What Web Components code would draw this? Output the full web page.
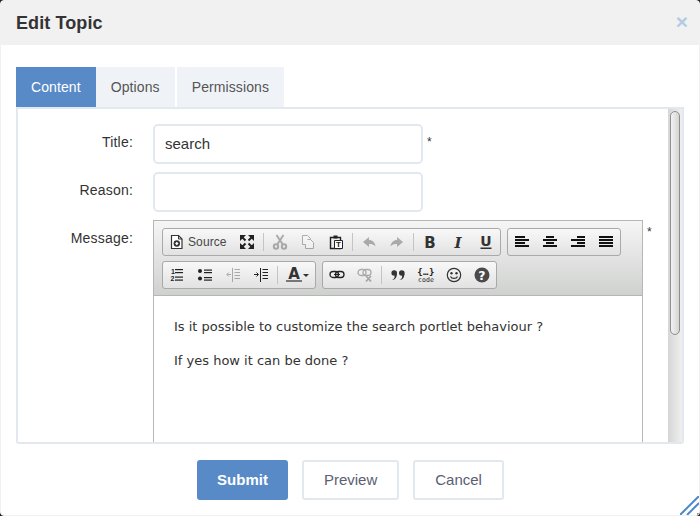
<!DOCTYPE html>
<html>
<head>
<meta charset="utf-8">
<title>Edit Topic</title>
<style>
    html, body { margin: 0; padding: 0; background: #222; }
    body { width: 700px; height: 516px; overflow: hidden; font-family: 'Liberation Sans', Arial, sans-serif; }
</style>
</head>
<body>
<topic-dialog>
    <span slot="title">Edit Topic</span>
    <tab-bar>
        <tab-item active>Content</tab-item>
        <tab-item>Options</tab-item>
        <tab-item>Permissions</tab-item>
    </tab-bar>
    <scroll-panel>
        <form-row label="Title:" required style="--star-top: 11px"><text-field>search</text-field></form-row>
        <form-row label="Reason:"><text-field></text-field></form-row>
        <form-row label="Message:" required style="--star-top: 5px">
            <rich-editor>
                <tool-group slot="toolbar">
                    <tool-btn icon="source" label="Source"></tool-btn>
                    <tool-btn icon="maximize"></tool-btn>
                    <tool-sep></tool-sep>
                    <tool-btn icon="cut" disabled></tool-btn>
                    <tool-btn icon="copy" disabled></tool-btn>
                    <tool-btn icon="paste"></tool-btn>
                    <tool-sep></tool-sep>
                    <tool-btn icon="undo" disabled></tool-btn>
                    <tool-btn icon="redo" disabled></tool-btn>
                    <tool-sep></tool-sep>
                    <tool-btn icon="bold"></tool-btn>
                    <tool-btn icon="italic"></tool-btn>
                    <tool-btn icon="underline"></tool-btn>
                </tool-group>
                <tool-group slot="toolbar">
                    <tool-btn icon="alignleft"></tool-btn>
                    <tool-btn icon="aligncenter"></tool-btn>
                    <tool-btn icon="alignright"></tool-btn>
                    <tool-btn icon="justify"></tool-btn>
                </tool-group>
                <tool-group slot="toolbar">
                    <tool-btn icon="numlist"></tool-btn>
                    <tool-btn icon="bulletlist"></tool-btn>
                    <tool-btn icon="outdent" disabled></tool-btn>
                    <tool-btn icon="indent"></tool-btn>
                    <tool-sep></tool-sep>
                    <tool-btn icon="textcolor" arrow></tool-btn>
                </tool-group>
                <tool-group slot="toolbar">
                    <tool-btn icon="link"></tool-btn>
                    <tool-btn icon="unlink" disabled></tool-btn>
                    <tool-sep></tool-sep>
                    <tool-btn icon="quote"></tool-btn>
                    <tool-btn icon="code"></tool-btn>
                    <tool-btn icon="smiley"></tool-btn>
                    <tool-btn icon="help"></tool-btn>
                </tool-group>
                <p>Is it possible to customize the search portlet behaviour ?</p>
                <p>If yes how it can be done ?</p>
            </rich-editor>
        </form-row>
    </scroll-panel>
    <dlg-button slot="footer" primary>Submit</dlg-button>
    <dlg-button slot="footer">Preview</dlg-button>
    <dlg-button slot="footer">Cancel</dlg-button>
</topic-dialog>

<script>
function bars(rows) {
    return rows.map((r, i) => `<rect x="${r[0]}" y="${2 + i * 3}" width="${r[1]}" height="2" fill="#111"/>`).join('');
}

// the list lines shared by outdent and indent, the arrow is what differs
function indentIcon(arrow) {
    return `<g fill="#222"><rect x="7" y="1" width="1" height="14"/><rect x="9.500" y="2" width="5.500" height="1"/><rect x="9.500" y="5" width="5.500" height="1"/><rect x="9.500" y="8" width="5.500" height="1"/><rect x="9.500" y="11" width="5.500" height="1"/></g><path d="${arrow}" fill="none" stroke="#222"/>`;
}

const ICONS = {
    source: `<path d="M2.500 1.500h7l3.500 3.500v9.500h-10.500z" fill="#fff" stroke="#333" stroke-width="1.200"/><path d="M9.500 1.500v3.500h3.500" fill="none" stroke="#333"/><circle cx="7.800" cy="9.500" r="3.200" fill="#333"/><path d="M7.800 7.800l1.700 1.700-1.700 1.700-1.700-1.700z" fill="#fff"/>`,
    maximize: `<g fill="#222"><path d="M1 1h6L1 7z"/><path d="M15 1H9l6 6z"/><path d="M1 15H7L1 9z"/><path d="M15 15H9l6-6z"/></g><path d="M3 3l3.500 3.500M13 3L9.500 6.500M3 13l3.500-3.500M13 13L9.500 9.500" stroke="#222" stroke-width="2"/>`,
    cut: `<g fill="none" stroke="#222" stroke-width="2"><circle cx="4" cy="12.500" r="2.200"/><circle cx="12" cy="12.500" r="2.200"/><path d="M5 10.800L11.500 1M11 10.800L4.500 1"/></g>`,
    copy: `<g fill="#fff" stroke="#222"><path d="M2.500 1.500h5l3 3v6h-8z"/><path d="M7.500 5.500h3l3 3v6h-8v-4"/></g>`,
    paste: `<path d="M2.500 3.500h10v11h-10z" fill="none" stroke="#222" stroke-width="1.400"/><path d="M5.500 1.500h4v3h-4z" fill="#222"/><path d="M6.500 6.500h8v8h-8z" fill="#fff" stroke="#222"/><text x="10.500" y="13.200" font-size="8" font-weight="bold" text-anchor="middle" fill="#222" font-family="Liberation Sans">T</text>`,
    undo: `<path d="M8 3L2 8l6 5v-3c3 0 5 .6 6.500 2.500C14 8.500 11.500 6 8 6z" fill="#222"/>`,
    redo: `<path d="M8 3l6 5-6 5v-3c-3 0-5 .6-6.500 2.500C2 8.500 4.500 6 8 6z" fill="#222"/>`,
    bold: `<text x="8" y="13.500" font-size="15" font-weight="bold" text-anchor="middle" fill="#333" font-family="DejaVu Sans">B</text>`,
    italic: `<text x="8" y="13.500" font-size="15" font-weight="bold" font-style="italic" text-anchor="middle" fill="#333" font-family="DejaVu Serif">I</text>`,
    underline: `<text x="8" y="12" font-size="14" font-weight="bold" text-anchor="middle" fill="#333" font-family="DejaVu Sans">U</text><rect x="2.500" y="13.500" width="11" height="1.500" fill="#333"/>`,
    alignleft: bars([[1, 10], [1, 14], [1, 10], [1, 14]]),
    aligncenter: bars([[4, 8], [1, 14], [4, 8], [1, 14]]),
    alignright: bars([[7, 8], [1, 14], [7, 8], [1, 14]]),
    justify: bars([[1, 14], [1, 14], [1, 14], [1, 14]]),
    numlist: `<g font-size="7" font-weight="bold" fill="#222" font-family="Liberation Sans"><text x="2" y="7">1</text><text x="1.500" y="14">2</text></g><g fill="#222"><rect x="6" y="2" width="8" height="1.200"/><rect x="6" y="5" width="8" height="1.200"/><rect x="6" y="9.500" width="8" height="1.200"/><rect x="6" y="12.500" width="8" height="1.200"/></g>`,
    bulletlist: `<g fill="#222"><circle cx="3" cy="4" r="2"/><circle cx="3" cy="11.500" r="2"/><rect x="7" y="2.500" width="8" height="1.200"/><rect x="7" y="5" width="8" height="1.200"/><rect x="7" y="10" width="8" height="1.200"/><rect x="7" y="12.500" width="8" height="1.200"/></g>`,
    outdent: indentIcon('M6 7.500H2M3.800 5.500l-2 2 2 2'),
    indent: indentIcon('M1 7.500h4M3.500 5.500l2 2-2 2'),
    textcolor: `<text x="8" y="12" font-size="15" font-weight="bold" text-anchor="middle" fill="#333" font-family="DejaVu Sans">A</text><rect x="0" y="13" width="16" height="2" fill="#777"/>`,
    link: `<g fill="none" stroke="#222" stroke-width="1.300"><rect x="1" y="4.500" width="8.500" height="6" rx="3"/><rect x="6.500" y="4.500" width="8.500" height="6" rx="3"/></g><path d="M5 7.500h6" stroke="#222"/>`,
    unlink: `<g fill="none" stroke="#222" stroke-width="1.300"><rect x="1" y="2.500" width="8" height="6" rx="3"/><rect x="6" y="2.500" width="8" height="6" rx="3"/><path d="M9 9l5 5.500M14 9l-5 5.500" stroke-width="1.800"/></g>`,
    quote: `<g fill="#333"><circle cx="4.200" cy="6" r="2.800"/><path d="M4.500 8.500C5 10.500 4 12 2 13c3.500 0 5-3.500 5-6.500z"/><circle cx="11.800" cy="6" r="2.800"/><path d="M12 8.500c.5 2-.5 3.500-2.500 4.500 3.500 0 5-3.500 5-6.500z"/></g>`,
    code: `<g fill="#222" font-family="DejaVu Sans Mono" text-anchor="middle"><text x="8" y="7.500" font-size="9" font-weight="bold" letter-spacing=".4">{…}</text><text x="8" y="14.500" font-size="6.500">code</text></g>`,
    smiley: `<circle cx="8" cy="8" r="6.700" fill="none" stroke="#333" stroke-width="1.200"/><circle cx="5.500" cy="6.200" r="1.200" fill="#333"/><circle cx="10.500" cy="6.200" r="1.200" fill="#333"/><path d="M4.500 9.500c1 2.500 6 2.500 7 0" fill="none" stroke="#333" stroke-width="1.200"/>`,
    help: `<circle cx="8" cy="8" r="7.500" fill="#4a4a4a"/><text x="8" y="12.500" font-size="12.500" font-weight="bold" text-anchor="middle" fill="#fff" font-family="DejaVu Sans">?</text>`
};

class TopicDialog extends HTMLElement {
    constructor() {
        super();
        this.attachShadow({ mode: 'open' }).innerHTML = `
            <style>
                :host {
                    display: flex;
                    flex-direction: column;
                    box-sizing: border-box;
                    position: relative;
                    width: 700px;
                    height: 516px;
                    background: #fff;
                    border: 1px solid #f1f1f1;
                    border-radius: 4px;
                    overflow: hidden;
                    color: #333;
                    font: 14px/20px 'Liberation Sans', Arial, sans-serif;
                    letter-spacing: .1px;
                }
                header {
                    display: flex;
                    justify-content: space-between;
                    align-items: center;
                    box-sizing: border-box;
                    height: 44px;
                    padding: 0 11px 0 15px;
                    background: #f1f1f1;
                    font-size: 18px;
                    font-weight: bold;
                }
                .close { color: #b4cbe3; font-size: 21px; font-weight: bold; margin-top: -2px; }
                main { flex: 1; display: flex; flex-direction: column; padding: 22px 15px 0; min-height: 0; }
                footer { display: flex; justify-content: center; gap: 14px; padding: 16px 0 15px 1px; }
                .grip { position: absolute; right: 0; bottom: 0; }
            </style>
            <header><slot name="title"></slot><span class="close">×</span></header>
            <main><slot></slot></main>
            <footer><slot name="footer"></slot></footer>
            <svg class="grip" width="19" height="19" viewBox="0 0 19 19">
                <path d="M0 19L19 0M7 19L19 7" stroke="#4f87cc" stroke-width="2" fill="none"/>
                <rect x="17" y="17" width="2" height="2" fill="#888"/>
            </svg>
        `;
    }
}

class TabBar extends HTMLElement {
    constructor() {
        super();
        this.attachShadow({ mode: 'open' }).innerHTML = `
            <style>:host { display: flex; height: 40px; flex: none; }</style>
            <slot></slot>
        `;
    }
}

class TabItem extends HTMLElement {
    constructor() {
        super();
        this.attachShadow({ mode: 'open' }).innerHTML = `
            <style>
                :host {
                    display: block;
                    padding: 10px 15px;
                    background: #eff3f7;
                    color: #555;
                    line-height: 20px;
                }
                :host([active]) { background: #588ac8; color: #fff; }
                :host(:last-child) { margin-left: 2px; }
            </style>
            <slot></slot>
        `;
    }
}

class ScrollPanel extends HTMLElement {
    constructor() {
        super();
        this.attachShadow({ mode: 'open' }).innerHTML = `
            <style>
                :host {
                    display: flex;
                    flex: none;
                    box-sizing: border-box;
                    height: 337px;
                    border: 2px solid #e1e8ef;
                    border-radius: 0 0 3px 3px;
                    overflow: hidden;
                }
                .content {
                    flex: 1;
                    min-width: 0;
                    display: flex;
                    flex-direction: column;
                    gap: 8px;
                    padding-top: 15px;
                    overflow: hidden;
                }
                .track {
                    flex: none;
                    box-sizing: border-box;
                    width: 14px;
                    padding: 2px;
                    background: linear-gradient(to right, #d6d6d6, #f0f0f0);
                }
                .thumb {
                    box-sizing: border-box;
                    height: 224px;
                    border: 1px solid #8e8e8e;
                    border-radius: 5px;
                    background: linear-gradient(to right, #f2f2f2, #d4d4d4);
                }
            </style>
            <div class="content"><slot></slot></div>
            <div class="track"><div class="thumb"></div></div>
        `;
    }
}

class FormRow extends HTMLElement {
    constructor() {
        super();
        this.attachShadow({ mode: 'open' }).innerHTML = `
            <style>
                :host { display: flex; gap: 20px; flex: none; }
                label { flex: none; width: 115px; text-align: right; padding-top: 8px; line-height: 20px; letter-spacing: .2px; }
                .field { display: flex; min-width: 0; gap: 4px; }
                .star { flex: none; font-size: 12px; line-height: 14px; padding-top: var(--star-top, 9px); color: #333; }
            </style>
            <label></label>
            <div class="field"><slot></slot><span class="star"></span></div>
        `;
    }

    connectedCallback() {
        this.shadowRoot.querySelector('label').textContent = this.getAttribute('label');
        this.shadowRoot.querySelector('.star').textContent = this.hasAttribute('required') ? '*' : '';
    }
}

class TextField extends HTMLElement {
    constructor() {
        super();
        this.attachShadow({ mode: 'open' }).innerHTML = `
            <style>
                :host {
                    display: block;
                    box-sizing: border-box;
                    width: 270px;
                    height: 40px;
                    padding: 8px 10px;
                    border: 2px solid #e1e8ef;
                    border-radius: 5px;
                    font-size: 15px;
                    line-height: 20px;
                    letter-spacing: 0;
                    color: #333;
                    background: #fff;
                }
            </style>
            <slot></slot>
        `;
    }
}

class RichEditor extends HTMLElement {
    constructor() {
        super();
        this.attachShadow({ mode: 'open' }).innerHTML = `
            <style>
                :host {
                    display: block;
                    box-sizing: border-box;
                    width: 490px;
                    height: 500px;
                    border: 1px solid #b6b6b6;
                }
                .toolbar {
                    display: flex;
                    flex-wrap: wrap;
                    gap: 5px 6px;
                    box-sizing: border-box;
                    height: 75px;
                    padding: 7px 8px 0;
                    align-content: flex-start;
                    background: linear-gradient(#f5f5f5, #cfd1cf);
                    border-bottom: 1px solid #b6b6b6;
                }
                .body {
                    padding: 8px 20px;
                    font: 13px/20px 'DejaVu Sans', Verdana, sans-serif;
                    letter-spacing: 0;
                    color: #333;
                }
                ::slotted(p) { margin: 13px 0 14px; }
            </style>
            <div class="toolbar"><slot name="toolbar"></slot></div>
            <div class="body"><slot></slot></div>
        `;
    }
}

class ToolGroup extends HTMLElement {
    constructor() {
        super();
        this.attachShadow({ mode: 'open' }).innerHTML = `
            <style>
                :host {
                    display: flex;
                    align-items: stretch;
                    height: 26px;
                    border: 1px solid #a9a9a9;
                    border-radius: 3px;
                    background: linear-gradient(#f8f8f8, #e2e2e2);
                }
            </style>
            <slot></slot>
        `;
    }
}

class ToolSep extends HTMLElement {
    constructor() {
        super();
        this.attachShadow({ mode: 'open' }).innerHTML = `
            <style>
                :host { display: block; width: 1px; margin: 4px 2px; background: #c4c4c4; }
            </style>
        `;
    }
}

class ToolBtn extends HTMLElement {
    constructor() {
        super();
        this.attachShadow({ mode: 'open' }).innerHTML = `
            <style>
                :host { display: flex; align-items: center; padding: 0 6px; }
                svg { display: block; flex: none; overflow: visible; }
                :host([disabled]) svg { opacity: 0.33; }
                .label { width: 42px; padding-left: 3px; box-sizing: border-box; font: 12px/16px 'Liberation Sans', Arial, sans-serif; color: #474747; letter-spacing: .1px; white-space: nowrap; }
                .arrow {
                    width: 0; height: 0; margin-left: 1px;
                    border: 3px solid transparent; border-top-color: #333; border-bottom: 0;
                }
            </style>
            <svg width="16" height="16" viewBox="0 0 16 16"></svg>
        `;
    }

    connectedCallback() {
        const root = this.shadowRoot;
        root.querySelector('svg').innerHTML = ICONS[this.getAttribute('icon')];
        const label = this.getAttribute('label');
        if (label) {
            const span = document.createElement('span');
            span.className = 'label';
            span.textContent = label;
            root.appendChild(span);
        }
        if (this.hasAttribute('arrow')) {
            const arrow = document.createElement('span');
            arrow.className = 'arrow';
            root.appendChild(arrow);
        }
    }
}

class DlgButton extends HTMLElement {
    constructor() {
        super();
        this.attachShadow({ mode: 'open' }).innerHTML = `
            <style>
                :host {
                    display: block;
                    box-sizing: border-box;
                    height: 40px;
                    padding: 8px 20px;
                    border: 2px solid #e1e8ef;
                    border-radius: 3px;
                    background: #fff;
                    color: #5a6072;
                    line-height: 20px;
                    font-size: 15px;
                    letter-spacing: 0;
                }
                :host([primary]) {
                    padding: 8px 18px;
                    background: #588ac8;
                    border-color: #588ac8;
                    color: #fff;
                    font-weight: bold;
                }
            </style>
            <slot></slot>
        `;
    }
}

customElements.define('topic-dialog', TopicDialog);
customElements.define('tab-bar', TabBar);
customElements.define('tab-item', TabItem);
customElements.define('scroll-panel', ScrollPanel);
customElements.define('form-row', FormRow);
customElements.define('text-field', TextField);
customElements.define('rich-editor', RichEditor);
customElements.define('tool-group', ToolGroup);
customElements.define('tool-sep', ToolSep);
customElements.define('tool-btn', ToolBtn);
customElements.define('dlg-button', DlgButton);
</script>
</body>
</html>
